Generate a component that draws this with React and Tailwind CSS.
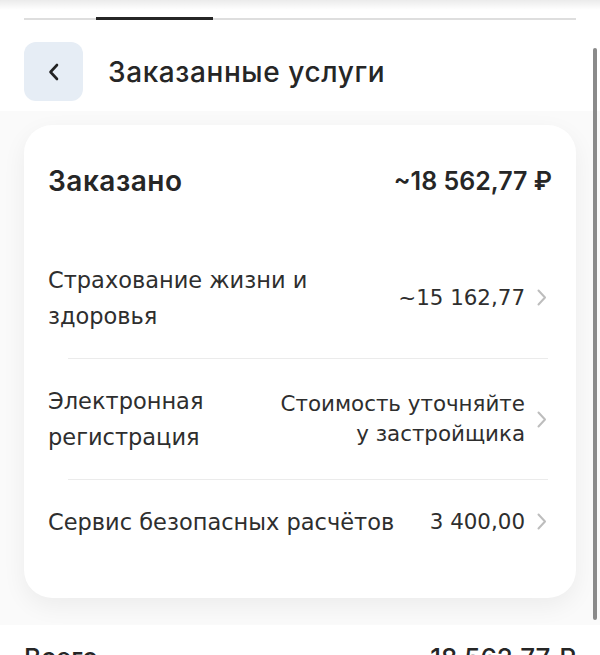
import React from "react";

const Chevron = () => (
  <svg width="10" height="17" viewBox="0 0 10 17" fill="none" className="shrink-0">
    <path d="M1.5 1.5L8 8.5L1.5 15.5" stroke="#bdbdbd" strokeWidth="2" strokeLinecap="round" strokeLinejoin="round" />
  </svg>
);

const Row = ({ left, right, border }) => (
  <div>
    {border && <div className="ml-[20px] mr-[4px] h-px bg-[#ebebeb]" />}
    <div className="flex items-center justify-between py-6 gap-4">
      <div className="leading-[36px] text-[22.5px]">{left}</div>
      <div className="flex items-center gap-[12px] pr-[5px] text-[21.4px]">
        <div className="text-right">{right}</div>
        <Chevron />
      </div>
    </div>
  </div>
);

export default function App() {
  return (
    <div className="relative w-[600px] h-[655px] overflow-hidden bg-[#fafafa] text-[#262626]" style={{ fontFamily: "Inter, 'Noto Sans', sans-serif" }}>
      <div className="h-[10px] bg-gradient-to-b from-[#ebebeb] to-white" />
      <div className="bg-white pt-[7px]">
        <div className="mx-6 flex items-end h-[3px]">
          <div className="w-[72px] h-[2px] bg-[#dedede]" />
          <div className="w-[117px] h-[3px] bg-[#262626]" />
          <div className="flex-1 h-[2px] bg-[#dedede]" />
        </div>
        <div className="px-6 pt-[22px] pb-[10px] flex items-center gap-[25px]">
          <div className="w-[59px] h-[59px] rounded-[12px] bg-[#e6edf5] flex items-center justify-center">
            <svg width="14" height="20" viewBox="0 0 14 20" fill="none">
              <path d="M10 3L3.5 10L10 17" stroke="#222" strokeWidth="2.6" strokeLinecap="round" strokeLinejoin="round" />
            </svg>
          </div>
          <div className="text-[28px] font-medium tracking-[0.6px]">Заказанные услуги</div>
        </div>
      </div>
      <div className="mx-6 mt-[14px] h-[473px] rounded-[28px] bg-white shadow-[0_8px_24px_rgba(0,0,0,0.06)] px-6">
        <div className="pt-[38px] flex items-center justify-between leading-[36px]">
          <div className="text-[28px] font-semibold tracking-[0.5px]">Заказано</div>
          <div className="text-[25px] font-semibold">~18 562,77 ₽</div>
        </div>
        <div className="mt-[39px] text-[#2e2e2e]" style={{ fontFamily: "'DejaVu Sans', 'Noto Sans', sans-serif" }}>
          <Row left={<>Страхование жизни и<br />здоровья</>} right={<span>~15 162,77</span>} />
          <Row border left={<>Электронная<br />регистрация</>} right={<div className="leading-[30px]">Стоимость уточняйте<br />у застройщика</div>} />
          <Row border left={<>Сервис безопасных расчётов</>} right={<span>3 400,00</span>} />
        </div>
      </div>
      <div className="mt-[27px] bg-white px-6 pt-[15px] flex justify-between text-[26px] font-medium leading-[36px]">
        <div>Всего</div>
        <div>18 562,77 ₽</div>
      </div>
      <div className="absolute right-[3px] top-[48px] w-[4px] h-[572px] rounded-full bg-[#8a8a8a]" />
    </div>
  );
}
